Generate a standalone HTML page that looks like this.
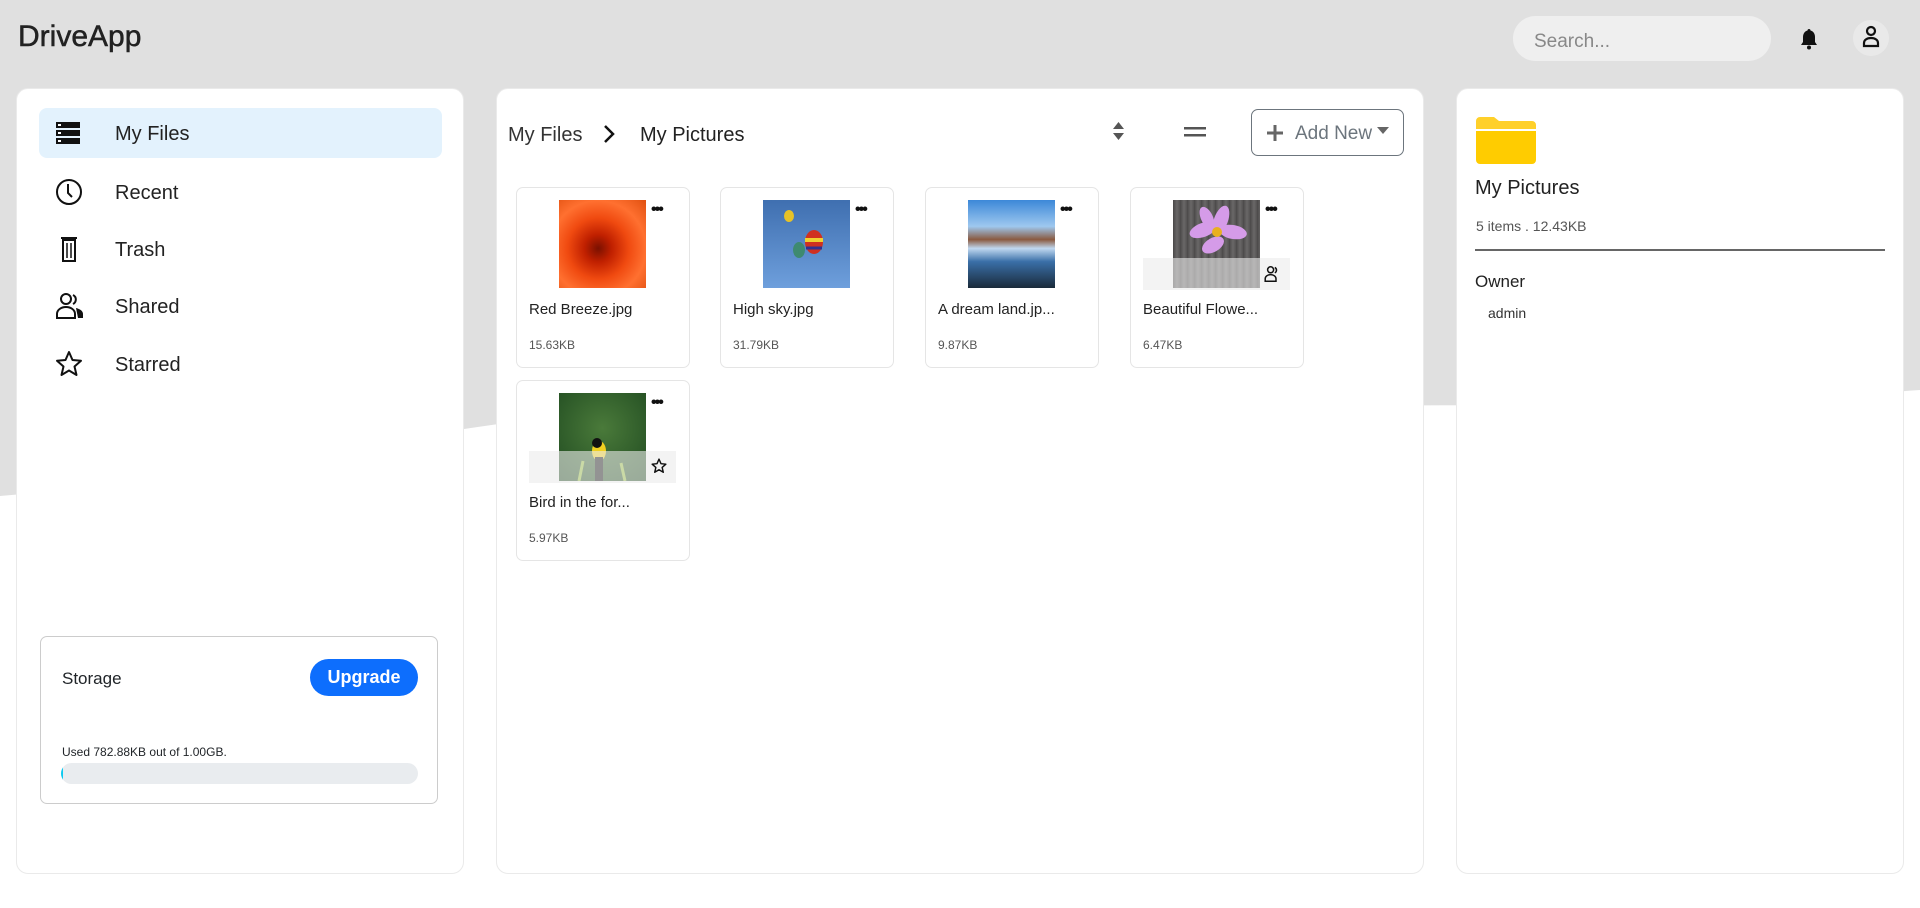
<!DOCTYPE html>
<html><head><meta charset="utf-8"><style>
*{box-sizing:border-box;margin:0;padding:0}
body{width:1920px;height:908px;overflow:hidden;background:#e0e0e0;font-family:"Liberation Sans",sans-serif;color:#212529;position:relative}
.abs{position:absolute}
.panel{position:absolute;background:#fff;border-radius:12px;top:88px;height:786px;border:1px solid #eaeaea}
.nav{position:absolute;left:39px;width:403px;height:50px;display:flex;align-items:center;font-size:20px;color:#222}
.nav svg{position:absolute;left:16px}
.nav span{position:absolute;left:76px;top:15px}
.card{position:absolute;width:174px;height:181px;border:1px solid #e5e5e5;border-radius:7px;background:#fff}
.card .img{position:absolute;left:42px;top:12px;width:87px;height:88px}
.card .dots{position:absolute;left:134px;top:17px;font-size:16px;letter-spacing:-2px;font-weight:bold;line-height:10px;color:#111}
.card .t{position:absolute;left:12px;top:113px;font-size:15px;color:#222;white-space:nowrap}
.card .s{position:absolute;left:12px;top:150px;font-size:12px;color:#555}
.ov{position:absolute;left:12px;top:70px;width:147px;height:32px;background:rgba(235,235,235,.6)}
</style></head><body>
<svg class="abs" style="left:0;top:0" width="1920" height="908"><path d="M0 496 C300 470 420 420 700 405 C1100 395 1500 420 1920 390 L1920 908 L0 908 Z" fill="#fff"/></svg>
<div class="abs" style="left:18px;top:20px;font-size:30px;color:#222;-webkit-text-stroke:0.5px #222">DriveApp</div>
<div class="abs" style="left:1513px;top:16px;width:258px;height:45px;border-radius:23px;background:#efefef;font-size:19px;color:#888;padding:15px 0 0 21px">Search...</div>
<svg class="abs" style="left:1799px;top:28px" width="20" height="22" viewBox="0 0 20 22"><path d="M10 1c-1 0-1.5.7-1.5 1.5C5.5 3.3 4 6 4 9v5l-2 3h16l-2-3V9c0-3-1.5-5.7-4.5-6.5C11.5 1.7 11 1 10 1z" fill="#111"/><circle cx="10" cy="19.5" r="2" fill="#111"/></svg>
<div class="abs" style="left:1853px;top:20px;width:36px;height:36px;border-radius:50%;background:#e9e9e9"></div>
<svg class="abs" style="left:1861px;top:25px" width="20" height="24" viewBox="0 0 20 24"><circle cx="10" cy="6" r="4" fill="none" stroke="#111" stroke-width="2.2"/><path d="M3 21v-3c0-3 3-5 7-5s7 2 7 5v3z" fill="none" stroke="#111" stroke-width="2.2"/></svg>

<div class="panel" style="left:16px;width:448px"></div>
<div class="abs" style="left:39px;top:108px;width:403px;height:50px;border-radius:8px;background:#e3f2fd"></div>
<div class="nav" style="top:108px"><svg width="26" height="24" viewBox="0 0 26 24"><rect x="1" y="1" width="24" height="6" fill="#111"/><rect x="1" y="9" width="24" height="6" fill="#111"/><rect x="1" y="17" width="24" height="6" fill="#111"/><rect x="3" y="3" width="3" height="2" fill="#fff"/><rect x="3" y="11" width="3" height="2" fill="#fff"/><rect x="3" y="19" width="3" height="2" fill="#fff"/></svg><span>My Files</span></div>
<div class="nav" style="top:167px"><svg width="28" height="28" viewBox="0 0 28 28"><circle cx="14" cy="14" r="12" fill="none" stroke="#111" stroke-width="2"/><path d="M13 6v9l4 4" fill="none" stroke="#111" stroke-width="2"/></svg><span>Recent</span></div>
<div class="nav" style="top:224px"><svg width="28" height="28" viewBox="0 0 28 28"><path d="M6 3h16M8 5h12v21H8z" fill="none" stroke="#111" stroke-width="2"/><path d="M12 8v15M16 8v15" stroke="#111" stroke-width="1.5"/></svg><span>Trash</span></div>
<div class="nav" style="top:281px"><svg width="30" height="28" viewBox="0 0 30 28"><circle cx="11" cy="7" r="5" fill="none" stroke="#111" stroke-width="2"/><path d="M18 3a5 5 0 0 1 0 9" fill="none" stroke="#111" stroke-width="2"/><path d="M2 26v-4c0-4 4-7 9-7s9 3 9 7v4z" fill="none" stroke="#111" stroke-width="2"/><path d="M21 16c4 1 7 3 7 6v4h-5" fill="#111"/></svg><span>Shared</span></div>
<div class="nav" style="top:339px"><svg width="28" height="28" viewBox="0 0 28 28"><path d="M14 2l3.5 8 8.5.8-6.5 5.7 2 8.5L14 20.5 6.5 25l2-8.5L2 10.8l8.5-.8z" fill="none" stroke="#111" stroke-width="2" stroke-linejoin="round"/></svg><span>Starred</span></div>

<div class="abs" style="left:40px;top:636px;width:398px;height:168px;border:1px solid #ccc;border-radius:7px"></div>
<div class="abs" style="left:62px;top:669px;font-size:17px">Storage</div>
<div class="abs" style="left:310px;top:659px;width:108px;height:37px;border-radius:19px;background:#0d6efd;color:#fff;font-size:18px;font-weight:bold;text-align:center;line-height:37px">Upgrade</div>
<div class="abs" style="left:62px;top:745px;font-size:12px">Used 782.88KB out of 1.00GB.</div>
<div class="abs" style="left:61px;top:763px;width:357px;height:21px;border-radius:11px;background:#e9ecef;overflow:hidden"><div style="width:2px;height:21px;background:#0dcaf0"></div></div>

<div class="panel" style="left:496px;width:928px"></div>
<div class="abs" style="left:508px;top:124px;font-size:20px;color:#333">My Files</div>
<svg class="abs" style="left:603px;top:124px" width="12" height="20" viewBox="0 0 12 20"><path d="M2 2l8 8-8 8" fill="none" stroke="#111" stroke-width="2.5"/></svg>
<div class="abs" style="left:640px;top:124px;font-size:20px;color:#222">My Pictures</div>
<svg class="abs" style="left:1112px;top:121px" width="13" height="20" viewBox="0 0 13 20"><path d="M6.5 1L12 8H1zM6.5 19L12 12H1z" fill="#555"/></svg>
<svg class="abs" style="left:1184px;top:127px" width="22" height="10"><rect y="0" width="22" height="2.5" fill="#555"/><rect y="7" width="22" height="2.5" fill="#555"/></svg>
<div class="abs" style="left:1251px;top:109px;width:153px;height:47px;border:1.5px solid #6c757d;border-radius:7px"></div>
<svg class="abs" style="left:1266px;top:124px" width="18" height="18"><path d="M9 1v16M1 9h16" stroke="#666" stroke-width="3"/></svg>
<div class="abs" style="left:1295px;top:123px;font-size:19px;color:#6c757d">Add New</div>
<svg class="abs" style="left:1377px;top:127px" width="12" height="8"><path d="M0 0h12L6 7z" fill="#666"/></svg>

<div class="card" style="left:516px;top:187px"><div class="img" style="background:radial-gradient(circle at 45% 55%,#7a1000 0,#c02000 20%,#f04a10 45%,#ff7030 70%,#e05010 100%)"></div><div class="dots">•••</div><div class="t">Red Breeze.jpg</div><div class="s">15.63KB</div></div>
<div class="card" style="left:720px;top:187px"><div class="img" style="background:linear-gradient(#3f6fb0,#6e9fdc)"><svg width="87" height="88"><ellipse cx="26" cy="16" rx="5" ry="6" fill="#e6c228"/><ellipse cx="36" cy="50" rx="6" ry="8" fill="#3e8a70"/><ellipse cx="51" cy="42" rx="9" ry="12" fill="#d03020"/><path d="M42 40h18" stroke="#f0d030" stroke-width="4"/><path d="M43 48h16" stroke="#303090" stroke-width="3"/></svg></div><div class="dots">•••</div><div class="t">High sky.jpg</div><div class="s">31.79KB</div></div>
<div class="card" style="left:925px;top:187px"><div class="img" style="background:linear-gradient(#3c88d8 0,#9ec8ef 30%,#8a5a40 45%,#c0d8f0 55%,#3a6fa8 70%,#1a2a3a 100%)"></div><div class="dots">•••</div><div class="t">A dream land.jp...</div><div class="s">9.87KB</div></div>
<div class="card" style="left:1130px;top:187px"><div class="img" style="background:repeating-linear-gradient(90deg,#4a4848 0,#6a6868 4px,#545252 7px)"><svg width="87" height="88"><g fill="#d59be8"><ellipse cx="30" cy="30" rx="14" ry="7" transform="rotate(-20 30 30)"/><ellipse cx="48" cy="20" rx="7" ry="15" transform="rotate(20 48 20)"/><ellipse cx="60" cy="32" rx="14" ry="7" transform="rotate(10 60 32)"/><ellipse cx="40" cy="45" rx="12" ry="7" transform="rotate(-30 40 45)"/><ellipse cx="34" cy="18" rx="6" ry="12" transform="rotate(-25 34 18)"/></g><circle cx="44" cy="32" r="5" fill="#e8b020"/></svg></div><div class="ov" style="left:12px;top:70px"></div><svg class="abs" style="left:133px;top:77px" width="18" height="18" viewBox="0 0 30 28"><circle cx="11" cy="7" r="5" fill="none" stroke="#111" stroke-width="2.5"/><path d="M18 3a5 5 0 0 1 0 9" fill="none" stroke="#111" stroke-width="2.5"/><path d="M2 26v-4c0-4 4-7 9-7s9 3 9 7v4z" fill="none" stroke="#111" stroke-width="2.5"/></svg><div class="dots">•••</div><div class="t">Beautiful Flowe...</div><div class="s">6.47KB</div></div>
<div class="card" style="left:516px;top:380px"><div class="img" style="background:radial-gradient(circle at 50% 40%,#4a7a3a,#1f4a20)"><svg width="87" height="88"><ellipse cx="40" cy="58" rx="7" ry="10" fill="#f0d020"/><path d="M36 64v24h8V64z" fill="#111"/><circle cx="38" cy="50" r="5" fill="#111"/><path d="M20 88l4-20M66 88l-4-18" stroke="#9ac040" stroke-width="3"/></svg></div><div class="ov"></div><svg class="abs" style="left:134px;top:77px" width="16" height="16" viewBox="0 0 28 28"><path d="M14 2l3.5 8 8.5.8-6.5 5.7 2 8.5L14 20.5 6.5 25l2-8.5L2 10.8l8.5-.8z" fill="none" stroke="#111" stroke-width="2.5" stroke-linejoin="round"/></svg><div class="dots">•••</div><div class="t">Bird in the for...</div><div class="s">5.97KB</div></div>

<div class="panel" style="left:1456px;width:448px"></div>
<svg class="abs" style="left:1476px;top:115px" width="60" height="49" viewBox="0 0 60 49"><path d="M0 6a4 4 0 0 1 4-4h14l5 4h33a4 4 0 0 1 4 4v4H0z" fill="#ffd02a"/><path d="M0 16h60v29a4 4 0 0 1-4 4H4a4 4 0 0 1-4-4z" fill="#ffcc00"/></svg>
<div class="abs" style="left:1475px;top:177px;font-size:20px;color:#222">My Pictures</div>
<div class="abs" style="left:1476px;top:218px;font-size:14px;color:#555">5 items . 12.43KB</div>
<div class="abs" style="left:1475px;top:249px;width:410px;height:2px;background:#666"></div>
<div class="abs" style="left:1475px;top:272px;font-size:17px;color:#222">Owner</div>
<div class="abs" style="left:1488px;top:305px;font-size:14px;color:#333">admin</div>
</body></html>
